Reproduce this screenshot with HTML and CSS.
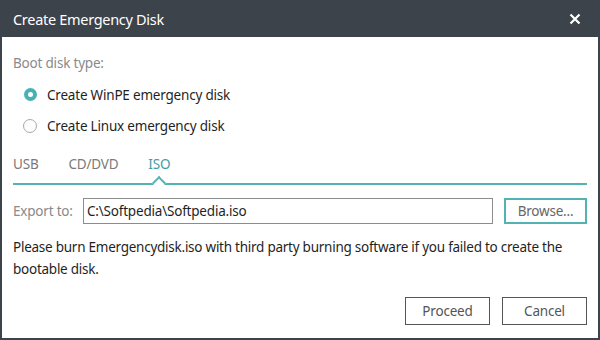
FILE: index.html
```html
<!DOCTYPE html>
<html lang="en">
<head>
    <meta charset="UTF-8">
    <title>Create Emergency Disk</title>
    <link rel="stylesheet" href="styles.css">
</head>
<body>
    <div class="window">
        <div class="titlebar">
            <span class="title">Create Emergency Disk</span>
            <svg class="close" width="12" height="12" viewBox="0 0 12 12">
                <path d="M1.5 1.5 L10.5 10.5 M10.5 1.5 L1.5 10.5" stroke="#fff" stroke-width="2.2" fill="none"/>
            </svg>
        </div>

        <div class="content">
            <div class="label">Boot disk type:</div>

            <div class="radio-list">
                <label class="radio-row">
                    <span class="radio checked"></span>
                    <span>Create WinPE emergency disk</span>
                </label>
                <label class="radio-row">
                    <span class="radio"></span>
                    <span>Create Linux emergency disk</span>
                </label>
            </div>

            <div class="tabs">
                <span class="tab">USB</span>
                <span class="tab">CD/DVD</span>
                <span class="tab active">ISO</span>
            </div>

            <div class="export-row">
                <span class="label">Export to:</span>
                <div class="path-box">C:\Softpedia\Softpedia.iso</div>
                <button class="browse-button">Browse...</button>
            </div>

            <p class="note">Please burn Emergencydisk.iso with third party burning software if you failed to create the bootable disk.</p>

            <div class="button-row">
                <button class="dialog-button">Proceed</button>
                <button class="dialog-button">Cancel</button>
            </div>
        </div>
    </div>
</body>
</html>
```

FILE: styles.css
```css
body {
    margin: 0;
    font-family: "Noto Sans", "Open Sans", sans-serif;
    background-color: white;
}
.window {
    width: 600px;
    height: 340px;
    box-sizing: border-box;
    border: 2px solid #3d434a;
    border-top: none;
    display: flex;
    flex-direction: column;
}
.titlebar {
    height: 37px;
    margin: 0 -2px;
    padding: 0 19px 0 13px;
    background-color: #3d434a;
    display: flex;
    align-items: center;
    justify-content: space-between;
    flex-shrink: 0;
}
.title {
    color: white;
    font-size: 14.5px;
    letter-spacing: -0.3px;
}
.content {
    padding: 0 11px;
    font-size: 13.5px;
    color: #1f1f1f;
    letter-spacing: -0.2px;
}
.label {
    color: #8a8a8a;
}
.content > .label {
    margin-top: 17px;
}
.radio-list {
    margin-top: 7px;
    padding-left: 11px;
}
.radio-row {
    display: flex;
    align-items: center;
    gap: 10px;
    height: 31px;
}
.radio {
    width: 12px;
    height: 12px;
    border: 1px solid #a8a8a8;
    border-radius: 50%;
    position: relative;
    margin-left: -1px;
}
.radio.checked {
    width: 13px;
    height: 13px;
    margin-left: 0;
    border: none;
    background-color: #4ab0b2;
}
.radio.checked::after {
    content: "";
    position: absolute;
    left: 4px;
    top: 4px;
    width: 5px;
    height: 5px;
    border-radius: 50%;
    background-color: white;
}
.tabs {
    margin-top: 14px;
    display: flex;
    gap: 30px;
    border-bottom: 2px solid #55b2b3;
    padding-bottom: 8px;
    height: 20px;
}
.tab {
    color: #7a7a7a;
    position: relative;
}
.tab.active {
    color: #3d9ea5;
}
/* little notch in the line under the active tab */
.tab.active::after {
    content: "";
    position: absolute;
    left: 50%;
    bottom: -13px;
    width: 8px;
    height: 8px;
    margin-left: -5px;
    background-color: white;
    border-top: 2px solid #55b2b3;
    border-left: 2px solid #55b2b3;
    transform: rotate(45deg);
}
.export-row {
    margin-top: 13px;
    display: flex;
    align-items: center;
}
.export-row .label {
    width: 70px;
}
.path-box {
    width: 405px;
    height: 24px;
    line-height: 24px;
    border: 1px solid #8c8c8c;
    padding-left: 3px;
}
.browse-button {
    margin-left: 11px;
    width: 83px;
    height: 26px;
    border: 2px solid #55b2b3;
    background-color: white;
    color: #666;
    font-family: inherit;
    font-size: 13.5px;
    letter-spacing: -0.2px;
    padding: 0;
}
.note {
    margin: 12px 0 0;
    line-height: 22px;
    letter-spacing: -0.25px;
}
.button-row {
    margin-top: 17px;
    display: flex;
    justify-content: flex-end;
    gap: 12px;
}
.dialog-button {
    width: 85px;
    height: 28px;
    border: 1px solid #555;
    background-color: white;
    color: #555;
    font-family: inherit;
    font-size: 13.5px;
    letter-spacing: -0.2px;
    padding: 0;
}
```
